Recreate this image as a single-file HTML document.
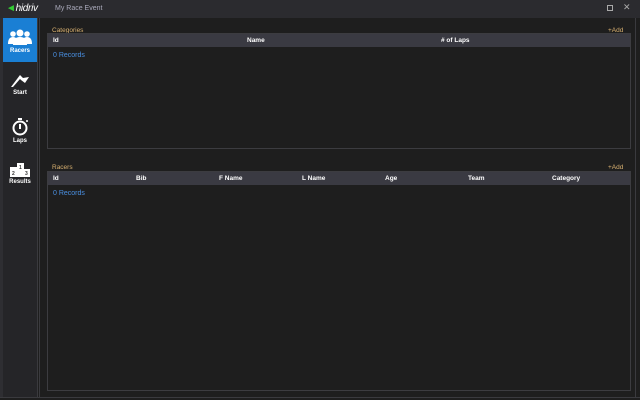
<!DOCTYPE html>
<html><head><meta charset="utf-8"><style>
*{margin:0;padding:0;box-sizing:border-box}
body{width:640px;height:400px;background:#1e1e1e;font-family:"Liberation Sans",sans-serif;font-size:7px;color:#fff;position:relative;overflow:hidden}
.tb{position:absolute;left:0;top:0;width:640px;height:18px;background:#2b2b2f}
.logo{position:absolute;left:6px;top:3px;font-size:10px;font-style:italic;color:#fff;letter-spacing:-0.3px}
.title{position:absolute;left:55px;top:5px;font-size:7px;color:#aab}
.side{position:absolute;left:0;top:18px;width:38px;height:380px;background:#252528;border-left:3px solid #2e2e32;border-right:1px solid #3a3a3e}
.vl{position:absolute;left:39px;top:18px;width:1px;height:380px;background:#3a3a3e}
.bl{position:absolute;left:0;top:397px;width:640px;height:1px;background:#3a3a3e}
.rl{position:absolute;left:635px;top:18px;width:1px;height:380px;background:#3a3a3e}
.nav{position:absolute;left:3px;width:34px;height:44px;text-align:center;font-size:6px;font-weight:bold}
.nav svg{display:block;margin:0 auto 2px}
.panel{position:absolute;left:47px;width:584px;border:1px solid #3c3c40}
.hd{height:13px;background:#3a3a42;position:relative;font-weight:bold;font-size:6.5px}
.hd span{position:absolute;top:3px}
.rec{color:#4a90e2;font-size:7px;position:absolute;left:5px;top:18px}
.lbl{position:absolute;left:52px;font-size:6.5px;color:#d8b070}
.add{position:absolute;left:608px;font-size:6.5px;color:#d8b070}
</style></head><body>
<div class="tb"><div class="logo"><span style="color:#3c3">◄</span>hidriv</div><div class="title">My Race Event</div>
<div style="position:absolute;left:607px;top:5px;width:6px;height:6px;border:1px solid #aaa"></div>
<div style="position:absolute;left:623px;top:2px;color:#aaa;font-size:9px">✕</div></div>
<div class="side"></div><div class="vl"></div><div class="bl"></div><div class="rl"></div>
<div class="nav" style="top:18px;height:44px;background:#1a7fd4;padding-top:11px">
<svg width="24" height="17" viewBox="0 0 24 17"><circle cx="5" cy="5" r="2.8" fill="#fff"/><circle cx="19" cy="5" r="2.8" fill="#fff"/><circle cx="12" cy="4" r="3.5" fill="#fff"/><path d="M0 15q0-7 5-7t5 7zM14 15q0-7 5-7t5 7z" fill="#fff"/><path d="M5 16q0-8 7-8t7 8z" fill="#fff"/></svg>Racers</div>
<div class="nav" style="top:72px"><svg width="20" height="16" viewBox="0 0 20 16"><path d="M1 15L10 3L13 6L19 5L15 11L11 8L10 7L3 15z" fill="#fff"/></svg>Start</div>
<div class="nav" style="top:117px"><svg width="18" height="19" viewBox="0 0 18 19"><circle cx="9" cy="11" r="6.5" fill="none" stroke="#fff" stroke-width="2"/><rect x="7" y="1" width="4" height="2" fill="#fff"/><path d="M9 7v5" stroke="#fff" stroke-width="2"/><circle cx="16" cy="4" r="1" fill="#fff"/></svg>Laps</div>
<div class="nav" style="top:162px"><svg width="22" height="15" viewBox="0 0 22 15"><rect x="1" y="5" width="7" height="10" fill="#fff"/><rect x="8" y="1" width="7" height="14" fill="#fff"/><rect x="15" y="7" width="6" height="8" fill="#fff"/><text x="3" y="13" font-size="5" fill="#333">2</text><text x="10" y="7" font-size="5" fill="#333">1</text><text x="16" y="13" font-size="5" fill="#333">3</text></svg>Results</div>
<div class="lbl" style="top:27px">Categories</div><div class="add" style="top:27px">+Add</div>
<div class="panel" style="top:33px;height:116px"><div class="hd"><span style="left:5px">Id</span><span style="left:199px">Name</span><span style="left:393px"># of Laps</span></div><div class="rec">0 Records</div></div>
<div class="lbl" style="top:164px">Racers</div><div class="add" style="top:164px">+Add</div>
<div class="panel" style="top:171px;height:220px"><div class="hd"><span style="left:5px">Id</span><span style="left:88px">Bib</span><span style="left:171px">F Name</span><span style="left:254px">L Name</span><span style="left:337px">Age</span><span style="left:420px">Team</span><span style="left:504px">Category</span></div><div class="rec">0 Records</div></div>
</body></html>
